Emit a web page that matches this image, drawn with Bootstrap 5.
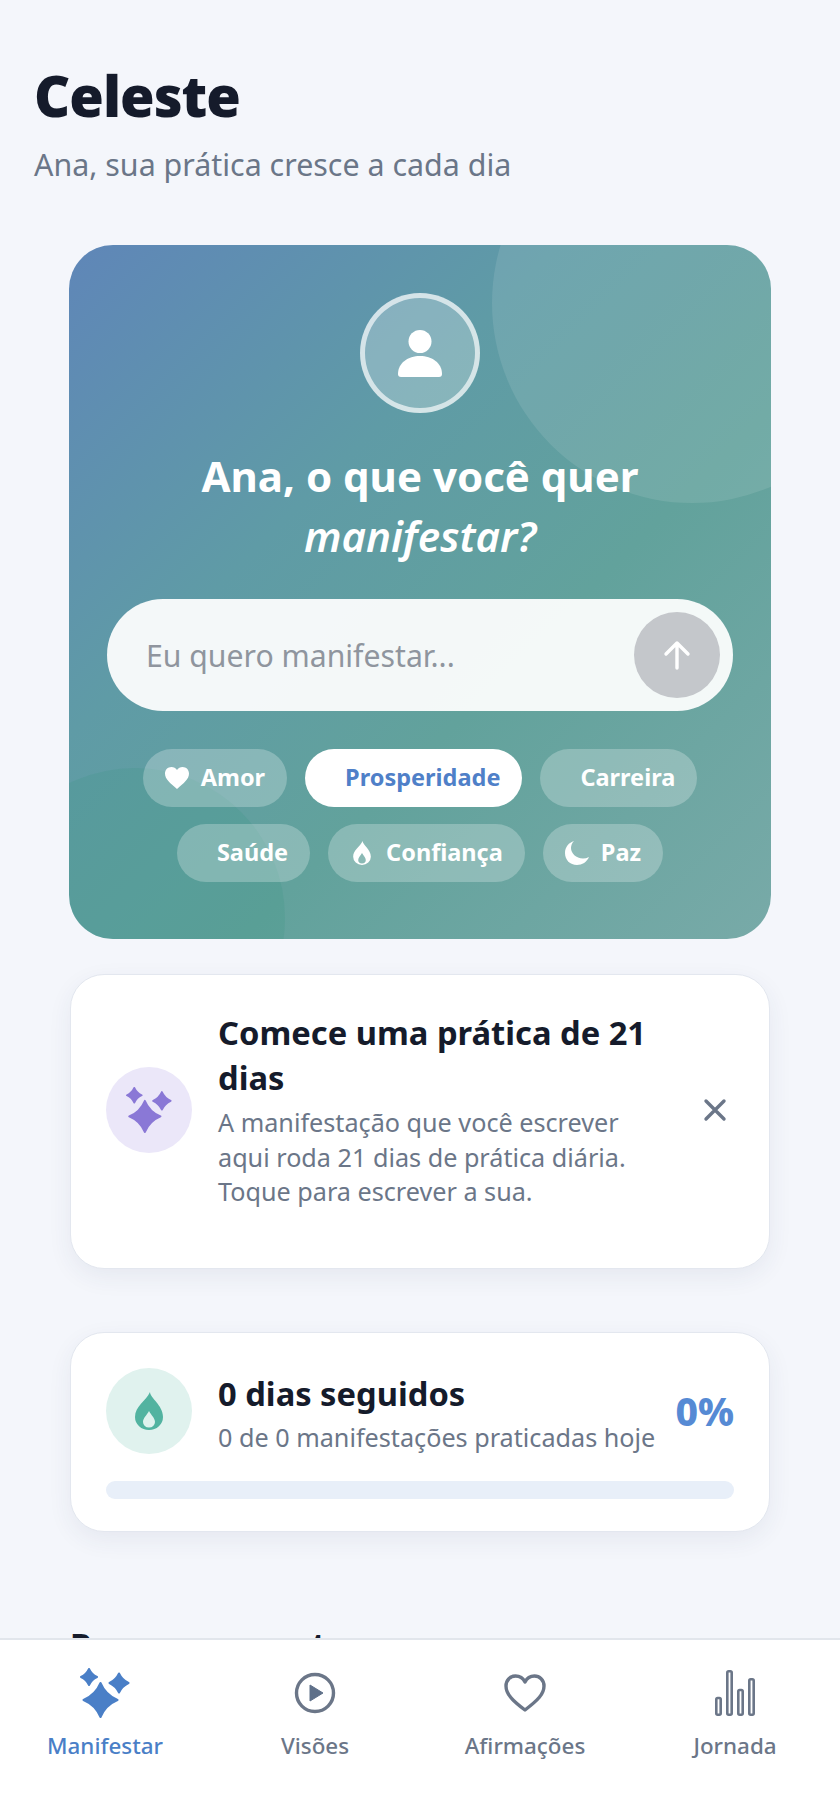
<!DOCTYPE html>
<html lang="pt-BR">
<head>
  <meta charset="UTF-8" />
  <meta name="viewport" content="width=device-width, initial-scale=1.0" />
  <title>Celeste</title>
  <link href="https://cdn.jsdelivr.net/npm/bootstrap@5.3.3/dist/css/bootstrap.min.css" rel="stylesheet">
  <style>
    html, body { height: 100%; overflow: hidden; }
    body {
      background-color: #f4f6fb;
      font-family: "Noto Sans", sans-serif;
      color: #151b2b;
    }
    .app-head { padding: 60px 34px 0; }
    .app-title { font-size: 56px; font-weight: 900; line-height: 70px; letter-spacing: -1px; margin: 0; }
    .app-sub { font-size: 30.4px; line-height: 40px; color: #6b7688; margin: 15px 0 0; }
    .hero {
      position: relative; overflow: hidden;
      margin: 60px 69px 0; height: 694px; padding: 48px 38px 0;
      border-radius: 44px;
      background: linear-gradient(135deg, #5f86b8 0%, #5f9ba6 35%, #62a29c 62%, #78aaa8 100%);
      color: #fff; text-align: center;
    }
    .hero-blob { position: absolute; border-radius: 50%; background: rgba(255,255,255,.1); }
    .blob-a { width: 400px; height: 400px; top: -142px; right: -121px; }
    .blob-b { width: 300px; height: 300px; left: -84px; top: 523px; background: rgba(60,150,130,.22); }
    .hero-inner { position: relative; }
    .avatar-ring {
      width: 120px; height: 120px; border-radius: 50%;
      background: rgba(255,255,255,.25); border: 5px solid rgba(255,255,255,.65);
    }
    .hero-title { font-size: 42px; line-height: 60px; font-weight: 700; margin: 33px 0 0; }
    .hero-title em { font-weight: 600; }
    .ask-box {
      height: 112px; margin-top: 33px; padding: 0 13px 0 39px;
      border-radius: 56px; background: rgba(255,255,255,.93);
    }
    .ask-text { font-size: 30.2px; color: #8f959e; padding-top: 2px; }
    .ask-send { width: 86px; height: 86px; border-radius: 50%; background: #c4c7cb; border: 0; padding: 0; }
    .chip-wrap { gap: 17px 18px; margin-top: 38px; }
    .topic {
      height: 58px; padding: 0 22px; border-radius: 29px; gap: 12px;
      background: rgba(255,255,255,.25); font-size: 23.5px; font-weight: 700; color: #fff;
    }
    .topic-on { background: #fff; color: #4f80c8; }
    .blank-ico { width: 6px; height: 24px; }
    .flame-box { width: 24px; text-align: center; line-height: 0; }
    .panel {
      background: #fff; border-radius: 34px; border: 1px solid #e3e7ef;
      box-shadow: 0 8px 24px rgba(40,60,100,.07);
      margin: 0 70px; padding: 0 35px;
    }
    .panel-start { margin-top: 35px; height: 295px; padding-bottom: 24px; }
    .panel-streak { margin-top: 63px; height: 200px; padding-top: 35px; }
    .ico-disc { width: 86px; height: 86px; border-radius: 50%; flex: none; color: #8a78d6; }
    .disc-violet { background: #ebe7f9; }
    .disc-mint { background: #e0f2ee; }
    .panel-title { font-size: 32.7px; line-height: 45px; font-weight: 700; color: #151b2b; margin: 0; }
    .panel-text { font-size: 25.2px; line-height: 34.5px; color: #6b7688; margin: 5px 0 0; }
    .start-copy { width: 434px; margin-left: 26px; }
    .close-x { margin-left: auto; margin-right: 7px; background: none; border: 0; padding: 0; line-height: 0; }
    .streak-copy { margin-left: 26px; padding-top: 3px; }
    .streak-copy .panel-text { margin-top: 4px; }
    .streak-pct { margin-left: auto; font-size: 39px; font-weight: 800; color: #568ad4; }
    .streak-bar { height: 18px; border-radius: 9px; background: #e8eff9; margin-top: 26px; }
    .next-title { font-size: 34px; font-weight: 800; line-height: 50px; margin: 88px 70px 0; }
    .tabbar {
      position: fixed; left: 0; right: 0; bottom: 0; height: 180px;
      background: #fff; border-top: 2px solid #e2e6ec;
    }
    .tab-item { padding-top: 23px; color: #6b7688; font-size: 22.4px; font-weight: 500; }
    .tab-on { color: #4a7fc7; }
    .tab-ico { height: 60px; margin-bottom: 6px; }
  </style>
</head>
<body>

<svg width="0" height="0" class="d-block">
  <symbol id="sparkles" viewBox="0 0 50 50">
    <path fill="currentColor" stroke="currentColor" stroke-width="2" stroke-linejoin="round" d="M20.500 15Q25.500 27 37.500 32 25.500 37 20.500 49 15.500 37 3.500 32 15.500 27 20.500 15zM9 1Q11.500 6.500 17 9 11.500 11.500 9 17 6.500 11.500 1 9 6.500 6.500 9 1zM39 5.500Q42 12 48.500 15 42 18 39 24.500 36 18 29.500 15 36 12 39 5.500z"/>
  </symbol>
  <symbol id="flame" viewBox="0 0 28 38">
    <path fill="currentColor" fill-rule="evenodd" d="M15 0C15 6 28 13 28 25A14 13 0 0 1 0 25C0 14 11 9 15 0zM14 19C12 23 8 26 8 30A6 5.500 0 0 0 20 30C20 26 16 23 14 19z"/>
  </symbol>
</svg>

<div class="app-head">
  <h1 class="app-title">Celeste</h1>
  <p class="app-sub">Ana, sua prática cresce a cada dia</p>
</div>

<div class="hero">
  <div class="hero-blob blob-a"></div>
  <div class="hero-blob blob-b"></div>
  <div class="hero-inner">
    <div class="avatar-ring d-flex align-items-center justify-content-center mx-auto">
      <svg width="44" height="47" viewBox="0 0 44 47" fill="#fff"><circle cx="22" cy="11.500" r="11.500"/><path d="M0 44C0 33 10 26 22 26s22 7 22 18c0 2-1 3-3 3H3c-2 0-3-1-3-3z"/></svg>
    </div>
    <h2 class="hero-title">Ana, o que você quer<br><em>manifestar?</em></h2>
    <div class="ask-box d-flex align-items-center justify-content-between">
      <span class="ask-text">Eu quero manifestar...</span>
      <button class="ask-send d-flex align-items-center justify-content-center" type="button" aria-label="Enviar">
        <svg width="28" height="30" viewBox="0 0 28 30" fill="none" stroke="#fff" stroke-width="3.400" stroke-linecap="round" stroke-linejoin="round"><path d="M14 28V3M3 14 14 3l11 11"/></svg>
      </button>
    </div>
    <div class="chip-wrap d-flex flex-wrap justify-content-center">
      <span class="topic d-flex align-items-center">
        <svg width="24" height="22" viewBox="0 0 24 22" fill="#fff"><path d="M12 22C5 16 0 12 0 6.500 0 2.800 2.800 0 6.400 0 8.700 0 10.800 1.100 12 3 13.200 1.100 15.300 0 17.600 0 21.200 0 24 2.800 24 6.500 24 12 19 16 12 22z"/></svg>
        Amor
      </span>
      <span class="topic topic-on d-flex align-items-center"><span class="blank-ico"></span>Prosperidade</span>
      <span class="topic d-flex align-items-center"><span class="blank-ico"></span>Carreira</span>
      <span class="topic d-flex align-items-center"><span class="blank-ico"></span>Saúde</span>
      <span class="topic d-flex align-items-center">
        <span class="flame-box text-white"><svg width="18" height="24"><use href="#flame"/></svg></span>
        Confiança
      </span>
      <span class="topic d-flex align-items-center">
        <svg width="24" height="24" viewBox="0 0 24 24" fill="#fff"><path d="M9 0C4 1.500 0 6 0 12c0 7 5 12 12 12 5 0 10-3 12-8-2 1-4 1.500-6 1.500C11 17.500 6 12 6 7c0-2.500 1-5 3-7z"/></svg>
        Paz
      </span>
    </div>
  </div>
</div>

<div class="panel panel-start d-flex align-items-center">
  <div class="ico-disc disc-violet d-flex align-items-center justify-content-center">
    <svg width="46" height="46"><use href="#sparkles"/></svg>
  </div>
  <div class="start-copy">
    <h3 class="panel-title">Comece uma prática de 21 dias</h3>
    <p class="panel-text">A manifestação que você escrever aqui roda 21 dias de prática diária. Toque para escrever a sua.</p>
  </div>
  <button class="close-x" type="button" aria-label="Fechar">
    <svg width="24" height="24" viewBox="0 0 24 24" stroke="#6b7688" stroke-width="3.400" stroke-linecap="round"><path d="M3 3l18 18M21 3 3 21"/></svg>
  </button>
</div>

<div class="panel panel-streak">
  <div class="d-flex align-items-center">
    <div class="ico-disc disc-mint d-flex align-items-center justify-content-center">
      <svg width="28" height="38" style="color:#52b3a0"><use href="#flame"/></svg>
    </div>
    <div class="streak-copy">
      <h3 class="panel-title">0 dias seguidos</h3>
      <p class="panel-text">0 de 0 manifestações praticadas hoje</p>
    </div>
    <div class="streak-pct">0%</div>
  </div>
  <div class="streak-bar"></div>
</div>

<h2 class="next-title">Para os seus atos</h2>

<nav class="tabbar d-flex">
  <div class="tab-item tab-on flex-fill w-25 text-center">
    <div class="tab-ico d-flex align-items-center justify-content-center">
      <svg width="50" height="50"><use href="#sparkles"/></svg>
    </div>
    Manifestar
  </div>
  <div class="tab-item flex-fill w-25 text-center">
    <div class="tab-ico d-flex align-items-center justify-content-center">
      <svg width="42" height="42" viewBox="0 0 42 42"><circle cx="21" cy="21" r="18.500" fill="none" stroke="#6b7688" stroke-width="3.400"/><path d="M16 13v16L29 21z" fill="#5f7089" stroke="#5f7089" stroke-linejoin="round"/></svg>
    </div>
    Visões
  </div>
  <div class="tab-item flex-fill w-25 text-center">
    <div class="tab-ico d-flex align-items-center justify-content-center">
      <svg width="42" height="38" viewBox="0 0 42 38" fill="none" stroke="#6b7688" stroke-width="3.400" stroke-linejoin="round"><path d="M21 36C8 26 2 20 2 12 2 6 6.500 2 11.500 2 15.500 2 19 4 21 8c2-4 5.500-6 9.500-6C35.500 2 40 6 40 12c0 8-6 14-19 24z"/></svg>
    </div>
    Afirmações
  </div>
  <div class="tab-item flex-fill w-25 text-center">
    <div class="tab-ico d-flex align-items-center justify-content-center">
      <svg width="40" height="46" viewBox="0 0 40 46" fill="none" stroke="#6b7688" stroke-width="2.600"><rect x="1.300" y="28" width="4.400" height="16.700" rx="1.400"/><rect x="12.300" y="1.300" width="4.400" height="43.400" rx="1.400"/><rect x="23.300" y="20" width="4.400" height="24.700" rx="1.400"/><rect x="34.300" y="9.300" width="4.400" height="35.400" rx="1.400"/></svg>
    </div>
    Jornada
  </div>
</nav>

</body>
</html>
